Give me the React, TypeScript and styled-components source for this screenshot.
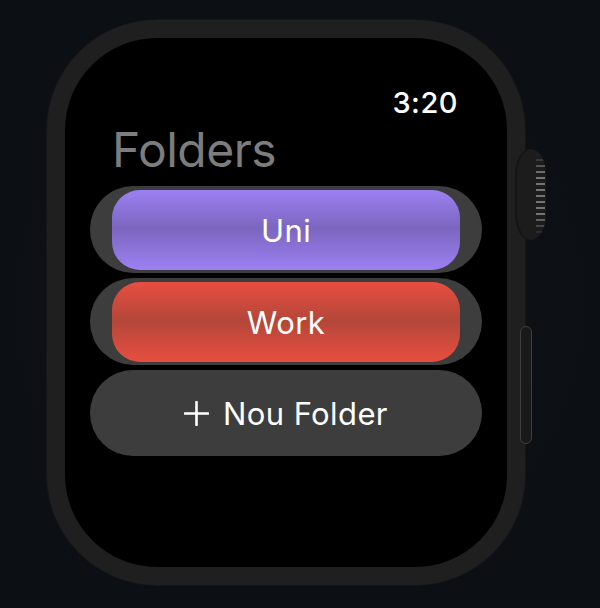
import React from 'react'
import styled, { createGlobalStyle } from 'styled-components'

const GlobalStyle = createGlobalStyle`
	html, body {
		margin: 0;
		padding: 0;
		background: #0d1015;
	}
	body {
		font-family: Inter, 'Noto Sans', 'Liberation Sans', sans-serif;
	}
`

const StyledStage = styled.div`
	display: flex;
	justify-content: flex-start;
	width: 600px;
	height: 608px;
	padding: 20px 0 0 47px;
	box-sizing: border-box;
	background: radial-gradient(circle at 50% 50%, #10141a 0%, #0c0f13 70%);
`

const StyledCase = styled.div`
	position: relative;
	width: 478px;
	height: 565px;
	padding: 18px;
	box-sizing: border-box;
	border-radius: 110px;
	background: #1f1f1f;
	box-shadow: 0 0 0 1px #161616;
`

const StyledCrown = styled.div`
	position: absolute;
	top: 129px;
	left: 468px;
	width: 31px;
	height: 91px;
	border-radius: 15px / 26px;
	background: #1c1c1c;
	box-shadow: inset 2px 0 0 #151515;
	overflow: hidden;
`

const StyledRidges = styled.div`
	position: absolute;
	top: 4px;
	bottom: 4px;
	right: 1px;
	width: 9px;
	background: repeating-linear-gradient(
		180deg,
		#747474 0px,
		#747474 2px,
		transparent 2px,
		transparent 6px
	);
	mask-image: linear-gradient(180deg, transparent 0%, #000 25%, #000 75%, transparent 100%);
`

const StyledSideButton = styled.div`
	position: absolute;
	top: 306px;
	left: 473px;
	width: 10px;
	height: 116px;
	border-radius: 6px;
	background: #191919;
	border: 1px solid #3e3e3e;
`

const StyledScreen = styled.div`
	display: flex;
	flex-direction: column;
	height: 100%;
	box-sizing: border-box;
	padding: 50px 25px 0;
	border-radius: 92px;
	background: #000;
`

const StyledStatusBar = styled.div`
	display: flex;
	justify-content: flex-end;
	padding-right: 24px;
	color: #fff;
	font-size: 29px;
	line-height: 1;
	font-weight: 500;
	letter-spacing: 0.5px;
`

const StyledTitle = styled.h1`
	margin: 9px 0 0 22px;
	color: #7d7d7d;
	font-size: 48px;
	line-height: 1;
	font-weight: 400;
	letter-spacing: -0.5px;
`

const StyledList = styled.div`
	display: flex;
	flex-direction: column;
	gap: 5px;
	margin-top: 12px;
`

const StyledFolderRow = styled.div`
	display: flex;
	height: 87px;
	padding: 4px 22px 3px;
	box-sizing: border-box;
	border-radius: 44px;
	background: #3d3d3d;
`

const StyledFolderPill = styled.div<{ top: string; mid: string }>`
	display: flex;
	flex: 1;
	align-items: center;
	justify-content: center;
	border-radius: 28px;
	color: #fff;
	font-size: 31px;
	line-height: 1;
	letter-spacing: 0.4px;
	background: linear-gradient(
		180deg,
		${(props) => props.top} 0%,
		${(props) => props.mid} 48%,
		${(props) => props.top} 100%
	);
`

const StyledAddButton = styled.button`
	display: flex;
	align-items: center;
	justify-content: center;
	gap: 14px;
	height: 86px;
	border: none;
	border-radius: 43px;
	background: #3d3d3d;
	color: #fff;
	font-family: inherit;
	font-size: 31px;
	line-height: 1;
	letter-spacing: 0.4px;
	padding: 0;
`

const folders = [
	{ name: 'Uni', top: '#9c80f3', mid: '#7b66be' },
	{ name: 'Work', top: '#e84e40', mid: '#b3473a' },
]

const PlusIcon = () => (
	<svg width="25" height="25" viewBox="0 0 25 25">
		<path d="M12.5 1v23M1 12.5h23" stroke="#fff" strokeWidth="2.6" strokeLinecap="round" />
	</svg>
)

export default function App() {
	return (
		<>
			<GlobalStyle />
			<StyledStage>
				<StyledCase>
					<StyledScreen>
						<StyledStatusBar>3:20</StyledStatusBar>
						<StyledTitle>Folders</StyledTitle>
						<StyledList>
							{folders.map((folder) => (
								<StyledFolderRow key={folder.name}>
									<StyledFolderPill top={folder.top} mid={folder.mid}>
										{folder.name}
									</StyledFolderPill>
								</StyledFolderRow>
							))}
							<StyledAddButton>
								<PlusIcon />
								Nou Folder
							</StyledAddButton>
						</StyledList>
					</StyledScreen>
					<StyledCrown>
						<StyledRidges />
					</StyledCrown>
					<StyledSideButton />
				</StyledCase>
			</StyledStage>
		</>
	)
}
